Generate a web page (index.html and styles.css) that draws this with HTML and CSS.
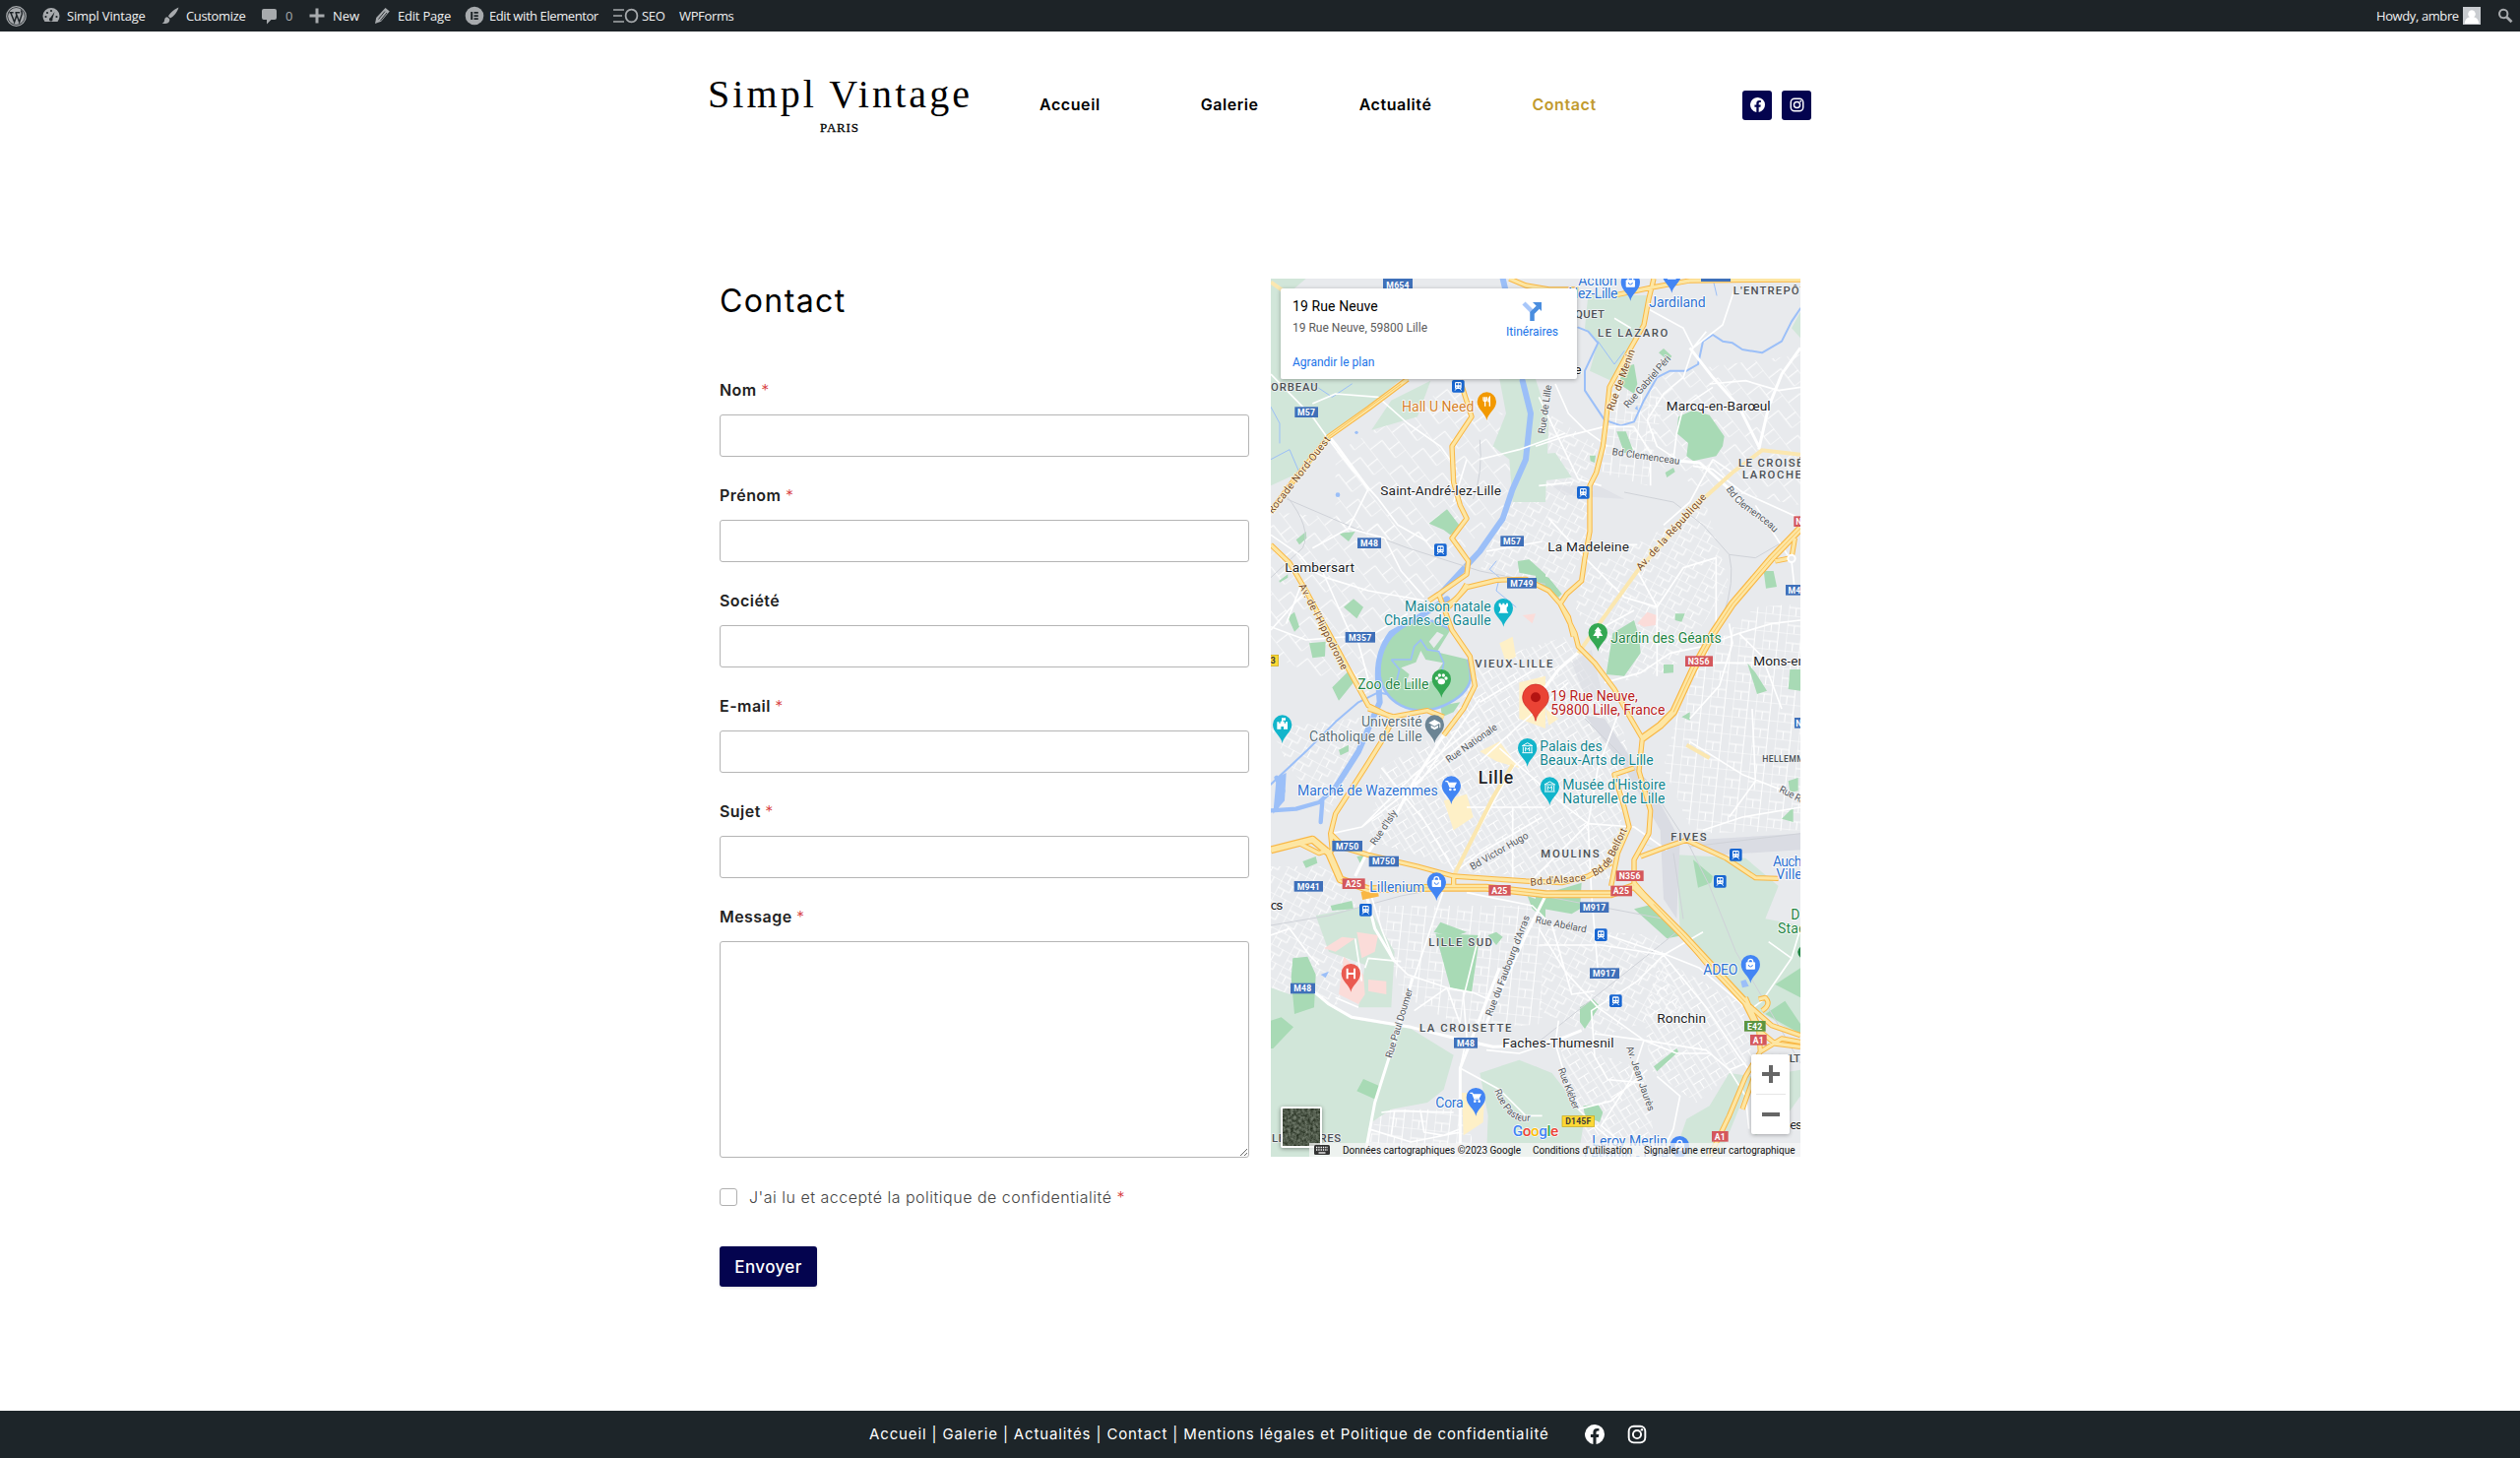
FILE: index.html
```html
<!DOCTYPE html>
<html lang="fr">
<head>
<meta charset="utf-8">
<title>Contact – Simpl Vintage</title>
<link rel="stylesheet" href="styles.css">
</head>
<body>
<svg class="defs" width="0" height="0" aria-hidden="true">
  <defs>
    <symbol id="fb" viewBox="0 0 24 24"><path d="M24 12a12 12 0 1 0-13.900 11.850v-8.380H7.080V12h3.020V9.360c0-3 1.790-4.670 4.530-4.670 1.310 0 2.690.24 2.690.24v2.950h-1.520c-1.490 0-1.950.93-1.950 1.870V12h3.330l-.53 3.470h-2.800v8.380A12 12 0 0 0 24 12z"/></symbol>
    <symbol id="ig" viewBox="0 0 24 24"><g fill="none" stroke="currentColor" stroke-width="2.300"><rect x="2" y="2" width="20" height="20" rx="6"/><circle cx="12" cy="12" r="4.900"/></g><circle cx="17.900" cy="6.200" r="1.500"/></symbol>
    <path id="pin" d="M0 57C-4 34-29 24-29 0A29 29 0 1 1 29 0C29 24 4 34 0 57Z"/>
    <g id="train"><rect x="-19" y="-19" width="38" height="38" rx="5" fill="#1967d2"/><rect x="-10" y="-13" width="20" height="21" rx="4" fill="#fff"/><path d="M-7 -9h6v6h-6zM1 -9h6v6H1zM-6 1h3v3h-3zM3 1h3v3H3z" fill="#1967d2"/><path d="M-6 8l-4 5M6 8l4 5" stroke="#fff" stroke-width="3"/></g>
    <g id="bag"><rect x="-14" y="-7" width="28" height="22" rx="3" fill="#fff"/><path d="M-7 -6v-3a7 7 0 0 1 14 0v3" fill="none" stroke="#fff" stroke-width="4"/><path d="M-6 1a6 6 0 0 0 12 0" fill="none" stroke="#4285f4" stroke-width="3"/></g>
    <g id="cart"><path d="M-18 -13h7l7 17h15" fill="none" stroke="#fff" stroke-width="4"/><path d="M-10 -10h27l-6 12H-5z" fill="#fff"/><circle cx="-3" cy="12" r="4" fill="#fff"/><circle cx="10" cy="12" r="4" fill="#fff"/></g>
    <g id="museum" fill="none" stroke="#fff" stroke-width="3"><path d="M-16 -6L0 -15L16 -6zM-16 15h32M-13 -3v16M13 -3v16"/><path d="M-6 11V-1l6 6 6-6v12"/></g>
    <pattern id="gridA" width="64" height="46" patternUnits="userSpaceOnUse" patternTransform="rotate(28)"><path d="M0 0H64M0 23H40M0 0V46M40 0V23M22 23V46" class="grid"/></pattern>
    <pattern id="gridB" width="58" height="50" patternUnits="userSpaceOnUse" patternTransform="rotate(-32)"><path d="M0 0H58M20 25H58M0 0V50M20 0V50M42 25V50" class="grid"/></pattern>
    <pattern id="gridC" width="70" height="54" patternUnits="userSpaceOnUse" patternTransform="rotate(6)"><path d="M0 0H70M0 30H45M0 0V54M45 0V54M22 30V54" class="grid"/></pattern>
    <pattern id="gridD" width="96" height="84" patternUnits="userSpaceOnUse" patternTransform="rotate(52)"><path d="M0 0H96M30 40H96M0 0V40M30 40V84M66 0V40" class="grid"/></pattern>
  </defs>
</svg>

<header class="adminbar">
  <div class="ab-item ab-wp"><svg width="21" height="21" viewBox="0 0 20 20"><circle cx="10" cy="10" r="9.300" fill="none" stroke="currentColor" stroke-width="1.200"/><circle cx="10" cy="10" r="8" fill="currentColor"/><path d="M3.300 6.500h4M9 6.500h4.500M4.800 6.800L8.200 15.600 10.300 9.300M9.700 6.800l3.300 8.800 2.500-7.600c.4-1.600-.8-2.600-.6-3.800" fill="none" stroke="#1d2327" stroke-width="1.400"/></svg></div>
  <div class="ab-item ab-site"><svg width="20" height="20" viewBox="0 0 20 20"><path d="M3.500 16A8.500 8.500 0 1 1 16.500 16z" fill="currentColor"/><g fill="#1d2327"><circle cx="4.500" cy="11" r="1.100"/><circle cx="6" cy="7" r="1.100"/><circle cx="10" cy="5" r="1.100"/><circle cx="15.500" cy="11" r="1.100"/><path d="M13.500 6l-2.100 7a1.800 1.800 0 1 1-2.200-1z"/></g></svg><span>Simpl Vintage</span></div>
  <div class="ab-item ab-customize"><svg width="20" height="20" viewBox="0 0 20 20"><path d="M18.500 1.500C13 4 9 8 8 10.500l2 2C13 11 17 7 18.500 1.500zM7 11.200c-3 .2-2.700 3-3.200 4.500-.4 1-1.300 1.800-2.300 2 4 1 8.500-.3 7.700-4.500z" fill="currentColor"/></svg><span>Customize</span></div>
  <div class="ab-item ab-comments"><svg width="20" height="20" viewBox="0 0 20 20"><path d="M4 3h11a2 2 0 0 1 2 2v7a2 2 0 0 1-2 2h-3.500L7 18.500V14H4a2 2 0 0 1-2-2V5a2 2 0 0 1 2-2z" fill="currentColor"/></svg><span>0</span></div>
  <div class="ab-item ab-new"><svg width="20" height="20" viewBox="0 0 20 20"><path d="M8.500 2.500h3v6h6v3h-6v6h-3v-6h-6v-3h6z" fill="currentColor"/></svg><span>New</span></div>
  <div class="ab-item ab-edit"><svg width="20" height="20" viewBox="0 0 20 20"><path d="M13.500 2l4.300 3.500-8.600 10.200L3 18l1.200-6z" fill="currentColor"/><path d="M13 5.500l-6.500 8M15 7l-6.500 8" stroke="#1d2327" stroke-width=".9"/></svg><span>Edit Page</span></div>
  <div class="ab-item ab-elementor"><svg width="20" height="20" viewBox="0 0 20 20"><circle cx="10" cy="10" r="9.300" fill="currentColor"/><path d="M6.200 6h2v8h-2zM9.500 6h4.300v1.700H9.500zM9.500 9.200h4.300v1.700H9.500zM9.500 12.300h4.300V14H9.500z" fill="#1d2327"/></svg><span>Edit with Elementor</span></div>
  <div class="ab-item ab-seo"><svg width="26" height="16" viewBox="0 0 26 16"><path d="M0 2h11M0 8h9M0 14h11" stroke="currentColor" stroke-width="1.600"/><ellipse cx="18.500" cy="8" rx="5.900" ry="6.400" fill="none" stroke="currentColor" stroke-width="1.800"/></svg><span>SEO</span></div>
  <div class="ab-item ab-forms"><span>WPForms</span></div>
  <div class="ab-item ab-user"><span>Howdy, ambre</span><svg width="18" height="18" viewBox="0 0 18 18"><path fill="#c9ccd0" d="M0 0h18v18H0z"/><path fill="#fff" d="M9 3.200a3.800 3.800 0 0 1 2 7c2.700.6 5 2.500 5.200 6.800H1.800c.2-4.300 2.500-6.200 5.200-6.800a3.800 3.800 0 0 1 2-7z"/></svg></div>
  <div class="ab-item ab-search"><svg width="16" height="16" viewBox="0 0 16 16"><circle cx="6.200" cy="6" r="4.200" fill="none" stroke="currentColor" stroke-width="2"/><path d="M9.400 9.200L14.500 14.300" stroke="currentColor" stroke-width="2.800"/></svg></div>
</header>

<div class="site-header">
  <svg class="logo" width="270" height="64" viewBox="0 0 270 64" role="img">
    <text x="1" y="33.500" class="logo-name" textLength="266">Simpl Vintage</text>
    <text x="115" y="58.500" class="logo-city" textLength="39">PARIS</text>
  </svg>
  <nav class="nav"><a>Accueil</a><a>Galerie</a><a>Actualité</a><a class="active">Contact</a></nav>
  <div class="social">
    <a class="social-btn"><svg width="15" height="15"><use href="#fb"/></svg></a>
    <a class="social-btn"><svg width="15" height="15"><use href="#ig"/></svg></a>
  </div>
</div>

<main class="content">
  <form class="form">
    <h1 class="title">Contact</h1>
    <label class="field"><span>Nom <i>*</i></span><input type="text"></label>
    <label class="field"><span>Prénom <i>*</i></span><input type="text"></label>
    <label class="field"><span>Société</span><input type="text"></label>
    <label class="field"><span>E-mail <i>*</i></span><input type="text"></label>
    <label class="field"><span>Sujet <i>*</i></span><input type="text"></label>
    <label class="field"><span>Message <i>*</i></span><textarea></textarea></label>
    <label class="consent"><b class="checkbox"></b><span>J'ai lu et accepté la politique de confidentialité <i>*</i></span></label>
    <button class="submit" type="button">Envoyer</button>
  </form>

  <section class="map">
    <svg class="map-canvas" width="538" height="892" viewBox="3 9 1614 2676">
      <rect x="0" y="0" width="1620" height="2700" fill="#e8eaed"/>

      <!-- street fabric -->
      <path fill="url(#gridD)" d="M200 540L560 330L740 440L730 700L560 860L200 760zM1180 300L1617 240V700L1300 640L1080 520z"/>
      <path fill="url(#gridD)" d="M3 720L480 760L540 960L340 1120L300 1280L3 1160z"/>
      <path fill="url(#gridA)" d="M850 420L1000 520L970 800L900 960L640 900L720 700L850 620zM960 900L1330 700L1400 940L1230 1200L1060 1240L930 1010z"/>
      <path fill="url(#gridC)" d="M1040 260L1200 380L1150 640L1010 600zM1280 1190L1480 1010L1617 1000V1690L1290 1700L1200 1500z"/>
      <path fill="url(#gridB)" d="M640 1180L900 1100L1070 1350L1100 1500L1040 1840L620 1820L300 1720L340 1500L540 1380z"/>
      <path fill="url(#gridA)" d="M3 1380L330 1340L180 1640L60 1500zM3 1800L180 1800L320 2000L200 2230L3 2180z"/>
      <path fill="url(#gridC)" d="M320 1920L830 1920L830 2280L600 2300L400 2190zM330 2540L580 2540L640 2685H290z"/>
      <path fill="url(#gridA)" d="M840 1990L1180 2010L1260 2240L1000 2320L820 2240z"/>
      <path fill="url(#gridB)" d="M1190 2080L1440 2220L1470 2380L1300 2520L1160 2420L1140 2250zM880 2330L1140 2420L1180 2685L960 2640z"/>

      <!-- countryside -->
      <g fill="#d1e6d9">
        <path d="M3 9H110L3 100zM3 100L33 60V315H400L300 400L180 490L90 600L3 640z"/>
        <path d="M370 380L490 320L450 430L310 470z"/>
        <path d="M700 315H810L850 440L840 690H740L730 560L680 520L720 420z"/>
        <path d="M810 545L870 540L920 615L810 628z"/>
        <path d="M970 60L1160 60L1140 160L1040 320L975 290L1000 200L960 160z"/>
        <path d="M1617 110V190L1590 160z"/>
        <path d="M3 2170L60 2190L120 2170L180 2220L250 2265L430 2295L560 2375L530 2480L480 2520L370 2540L310 2580L290 2685H3z"/>
        <path d="M640 2430L760 2390L860 2430L960 2560L940 2685H660L665 2560z"/>
        <path d="M1240 1765L1450 1775L1550 1860L1510 1960L1617 1980V2320L1450 2215L1250 2000z"/>
        <path d="M1400 2430L1470 2440L1370 2685H1230L1270 2570L1340 2530z"/>
        <path d="M1500 2440L1617 2420V2500L1560 2580L1480 2620z"/>
        <path d="M140 1950L300 1920L380 2060L370 2230L270 2230L290 2100L180 2060z"/>
        <path d="M810 2410L850 2430L810 2460z"/>
      </g>
      <!-- industry and rail yards -->
      <g fill="#dadce3">
        <path d="M960 1340L1020 1350L1180 1590L1250 1720L1240 1960L1200 1900L1190 1690L1080 1500z"/>
        <path d="M1290 1720L1617 1700V1750L1370 1765z"/>
        <path d="M860 640L1000 640L1080 680L900 670z" opacity=".6"/>
        <path d="M920 1180L980 1140L1020 1300L960 1280z" opacity=".6"/>
      </g>
      <!-- parks -->
      <g fill="#a8dab5">
        <path d="M1245 430L1290 410L1340 425L1385 490L1380 520L1360 550L1290 565L1270 550L1275 510L1240 480z"/>
        <path d="M1075 280L1110 270L1120 330L1110 360L1065 330zM1185 235L1200 222L1225 245L1215 260zM1057 475L1085 475L1110 540H1080zM1205 600L1230 585L1235 598L1210 615zM975 548H993L990 570L977 565z"/>
        <path d="M485 755L540 712L585 770L550 790L530 775zM210 785L260 780L240 810zM80 805L110 780L112 800L90 820zM225 1010L255 985L285 1010L265 1045zM55 1040L75 1025L90 1070L75 1085zM120 1120L170 1115L168 1160L130 1165zM190 1255L245 1200L255 1240L210 1295zM28 930L55 910V920L30 935z"/>
        <path d="M755 870L790 865L840 910V920L760 905zM810 905L850 920L890 970L880 980L810 940z"/>
        <path d="M1045 1090L1110 1050L1125 1100L1130 1150L1080 1220L1025 1215zM1505 900H1535L1545 948L1512 953zM1235 1030L1265 1030L1255 1055L1235 1050zM1200 1185H1230V1210L1200 1212zM1455 1180L1480 1210L1515 1265L1485 1275zM1585 1200H1617V1265L1580 1260zM1255 1345L1280 1330V1355z"/>
        <path d="M520 1310L580 1300L560 1330L525 1345zM210 1445L240 1430V1450L215 1462zM100 1785L140 1770L145 1790L110 1805zM265 1770L295 1765L275 1790zM185 1920L250 1905L255 1930L190 1935zM500 2000L520 1970L600 2000L560 2015zM785 1890L840 1910V1960L800 1930z"/>
        <path d="M810 1890L900 1865L950 1850L945 1930L920 1945L810 1925zM1290 1780L1350 1830L1345 1850L1305 1865zM1110 1930L1170 1915L1260 2010L1210 2020zM1140 1730L1180 1745L1150 1735zM1580 1540L1610 1530V1570L1585 1575zM1560 1655L1595 1620V1665z"/>
        <path d="M505 2005L640 2010L615 2185L550 2170zM70 2080L115 2075L140 2130L135 2230L75 2250L65 2140zM3 2270L35 2260L72 2290L10 2355H3zM265 2485L285 2448L335 2470L325 2512zM945 2230L985 2205L1005 2225L960 2295L945 2275zM1170 2410L1240 2355L1245 2365L1180 2425zM955 2530L1000 2525L1015 2550L1005 2580L960 2560zM1510 2250L1570 2210L1617 2280V2310z"/>
        <path d="M1540 2160L1617 2110V2200zM665 2010L690 2000L710 2015L690 2040z"/>
      </g>
      <!-- hospitals and shopping -->
      <g fill="#fbdcd9"><path d="M165 2050L220 2015L260 2020L200 2060zM265 2000L330 2010L320 2060L280 2080zM225 2075L285 2130L290 2190L270 2220L210 2190zM300 2145L355 2150V2190L300 2180zM1120 1060L1150 1025L1180 1035L1175 1065L1140 1070zM770 1035L810 1030L800 1060z"/></g>
      <g fill="#fef0c7"><path d="M700 1120L740 1100L750 1160L720 1180zM760 1240L840 1220V1380L760 1350zM840 1320L880 1350L850 1370zM530 1600L600 1580L620 1650L560 1690zM585 2490L655 2490L650 2580L590 2620zM640 1450L700 1420L760 1500L690 1480z"/></g>

      <!-- water -->
      <g fill="none" stroke="#9bbff8" stroke-linecap="round" stroke-linejoin="round">
        <path stroke-width="18" d="M710 9L722 60M770 320L795 420L780 560L740 650L710 740L640 840L520 970"/>
        <path stroke-width="18" d="M540 985L440 1050L370 1090Q325 1150 330 1230L335 1300L270 1450L200 1560"/>
        <path stroke-width="13" d="M3 1630L80 1625L150 1605L200 1560M160 1600L155 1665"/>
        <path stroke-width="14" d="M20 1530L40 1570L20 1620"/>
        <path stroke-width="6" d="M3 1550L110 1450L200 1360L270 1300L330 1270L380 1280"/>
        <path stroke-width="6" d="M940 158L970 170L1000 205L960 290V350L1020 440L1070 457L1110 445L1140 380L1180 310L1220 290L1270 290L1305 270L1320 200L1350 180L1380 200L1410 205L1440 225L1500 235L1560 200L1590 140L1617 100"/>
        <path stroke-width="3" d="M1350 9L1362 60M690 870L670 895L700 920L690 960L750 1010M1000 200L1050 270L1080 230M3 560L60 530L90 600M130 330L190 370L250 330M3 400L30 450V510M1010 20L1040 60"/>
      </g>
      <g fill="#9bbff8"><path d="M20 1530L50 1515L45 1600L10 1640zM1112 405L1120 395L1122 410zM155 2130L180 2120L170 2140zM1435 2150L1450 2145L1460 2165L1440 2170z"/><circle cx="264" cy="478" r="5"/><circle cx="207" cy="668" r="7"/></g>
      <!-- citadel -->
      <path d="M470 1050Q420 1050 370 1100Q330 1150 335 1220Q345 1280 400 1310Q460 1340 530 1310Q600 1280 612 1230Q612 1150 560 1090Q520 1050 470 1050Z" fill="#a8dab5" stroke="#9bbff8" stroke-width="8"/>
      <path d="M510 1145L550 1080L600 1150L605 1170L520 1150zM485 1115L510 1085L530 1095L500 1135z" fill="#e8eaed"/>
      <path d="M370 1170L430 1170L440 1130L460 1110L480 1140L515 1145L530 1180L520 1230M370 1170L395 1200L385 1240" fill="none" stroke="#9bbff8" stroke-width="5"/>
      <path d="M460 1143L475 1170L528 1180L510 1205L525 1235L490 1235L475 1260L455 1235L415 1240L425 1215L400 1195L445 1178z" fill="#e8eaed"/>

      <!-- railways -->
      <g fill="none" stroke="#cfd2d8" stroke-width="3">
        <path d="M50 680L260 770L420 830L640 900L840 940M3 920L100 830Q130 770 50 670M1080 660L1230 690L1320 760L1400 850L1480 860L1617 780M1400 850Q1420 930 1380 1040M3 1980L180 1950L400 1890L560 1860M1280 1740L1340 1860L1420 2060L1617 2400M800 2350L1240 2000M1230 1760L1260 1960"/>
        <path d="M640 500Q650 600 620 680M520 1870L780 1880L1200 1960M960 1350L1150 1540L1280 1740M1280 1740L1617 1700"/>
      </g>

      <!-- local roads -->
      <g fill="none" stroke="#fff" stroke-width="5" stroke-linejoin="round">
        <path d="M3 300L130 430L180 500L250 590L330 680L390 760L480 810M130 390L200 360L330 370L420 450L520 520L570 590M640 560L760 530L900 480M3 790L90 850L130 900L170 920L300 960L470 990M130 830L240 770L300 650M110 960L3 1080M240 770L350 800L400 900L470 980M160 900L240 1080L270 1120L420 1030M3 1070L110 1110L240 1100M100 930L50 1060M270 1120L300 1230M660 840L830 810M600 560L560 690"/>
        <path d="M870 330L910 420L960 470L1030 520M810 520L900 490L1020 460L1110 460L1160 540L1160 640M1150 440L1200 360L1260 310L1290 220L1380 150L1420 30M1150 440L1180 520L1240 560M1230 560L1240 480L1260 400L1350 340M1350 560L1280 690L1200 760M1150 100L1260 160L1290 220L1330 170M1290 580L1350 590L1440 660L1617 740M1350 560L1410 600M1340 330L1450 320L1550 350L1617 340M1100 160L1050 130M820 370L940 620L1010 640M820 640L920 630"/>
        <path d="M930 820L1120 820M850 740L960 860L1080 980L1180 1010M1120 900L1180 1010L1180 1220M1180 1010L1260 890L1360 860V1060M1020 1240L1130 1210L1220 1150L1320 1130L1430 1090L1530 1060L1617 1050M1290 1180L1617 1180M1430 1090L1500 1160L1560 1320M1400 1060L1410 1120L1370 1250L1280 1350M1480 700L1590 870L1600 960M1280 1420L1440 1520L1617 1590M1470 1320L1480 1540L1400 1650M1617 1620L1440 1650L1320 1690M1000 1080L1110 1020M640 1300L840 1180"/>
        <path d="M640 1480L760 1370L910 1240M280 1680L460 1540L560 1400L640 1290M190 1700L280 1680L440 1520L640 1360M340 1500L470 1660L560 1810M440 1550L640 1380M560 1830L640 1680L740 1500L840 1410M560 1820L640 1760L830 1650M600 1620H840M700 1440L880 1600L970 1670L1110 1680L1210 1750M970 1670L860 1780L800 1840M970 1670L980 1880L1000 2120M1060 1340L1000 1500L970 1670M880 1600L1110 1600M740 1840V1620M530 1870L500 1960L440 2140M300 1860L340 1990L380 2090L420 2130L540 2170L620 2185L700 2220"/>
        <path d="M3 2010L60 1990L120 2070L150 2100M200 2200L270 2230M600 1880L800 1920L860 1980L920 2190L990 2180M820 2040L1010 2040L1200 2070L1320 2000M1200 2070L1330 2230L1430 2380L1490 2460M1030 2010L1210 2070L1310 2110L1450 2230M820 1990L900 2120L1000 2230L1140 2330M1200 2070L1120 2150L980 2240L990 2380L1030 2450L1140 2460M1140 2330L1330 2360L1400 2420L1450 2400M1400 2420L1450 2500L1460 2600M1140 2330L1100 2450L1010 2590L1120 2685M1180 2440L1250 2500L1230 2600L1190 2680M990 2310L1140 2330L1240 2370L1340 2370M1520 2030L1590 2080L1500 2210L1460 2240M1590 2080L1617 1990M880 2270L870 2340L900 2440L940 2540L1000 2600L1100 2685M940 2540L1040 2515L1150 2420M580 2415L700 2480L780 2560L830 2560"/>
        <path d="M340 2550L380 2545L560 2550M380 2545L370 2620M460 2550L470 2610L530 2620L580 2600M300 2600L430 2640L580 2610M440 2240L540 2170L580 2280M640 2000L590 2200L600 2320L580 2415M290 2110L300 2080L400 2090M260 2020L280 2150M660 2360L760 2370L820 2350"/>
      </g>
      <g fill="none" stroke="#fff" stroke-width="9" stroke-linejoin="round">
        <path d="M180 490L205 520L300 650M1280 220L1350 310L1430 400L1490 520M1490 530L1520 400L1560 300L1617 220M1250 565L1310 570L1400 650L1440 700M530 1400L440 1540L380 1650L290 1770L260 1830M120 2170L180 2220L250 2260L430 2290L570 2325L680 2350L810 2345L900 2320L950 2300M435 2140L380 2330L320 2520L290 2680M700 2110L580 2415L580 2690M850 1870L780 2010L650 2300M950 1140L880 1200L820 1280M380 2090L320 1990L290 1870"/>
      </g>

      <!-- avenues -->
      <g fill="none" stroke="#fbe7b0" stroke-width="12"><path d="M1617 545L1500 532L1410 600L1310 690L1120 900L990 1080L940 1150M1270 1430L1340 1470M560 1830L680 1590L740 1490M3 20L60 60L150 50"/></g>

      <!-- trunk roads -->
      <g fill="none" stroke="#f9b744" stroke-width="16" stroke-linejoin="round">
        <path id="trunk" d="M1170 9L1155 70L1140 150L1100 220L1035 340L1025 440L1015 520L995 600L975 640V780L960 860L950 930L905 970L885 1000M1050 60L1170 35L1280 15L1617 12M730 9L780 30L850 42H940M545 1010L600 950L690 928L780 925L850 960L885 1000L930 1090L940 1130L990 1180L1050 1260L1100 1350L1135 1410L1125 1510L1160 1630L1155 1700L1110 1780V1850L1160 1910L1260 2010L1330 2095L1450 2215L1530 2285L1617 2315M885 1000L910 1040L925 1100M580 320L615 430L555 520L560 630L580 700L600 740L555 800L605 870L600 910L515 970L485 990M515 970L555 1080L610 1160L625 1250L590 1320L530 1400M510 1010Q560 1010 600 940M420 315L300 405L180 490L60 640L3 720M3 820L60 875L110 960L240 1200L300 1310L370 1345L480 1325L530 1345M300 1320L380 1345L340 1420L290 1500L200 1640L185 1700L190 1750L180 1760M185 1700L230 1745L300 1765L450 1800L560 1830L780 1845L890 1850L970 1830L1040 1790M1110 1500L1050 1520L1080 1620L1095 1680L1060 1760L1040 1860M1130 1770L1210 1740L1270 1720L1390 1775L1480 1835L1550 1837M90 1730L150 1760L180 1750M560 1830V1865M1450 2200L1490 2295L1495 2365L1450 2440L1400 2560L1340 2685M1495 2365L1560 2325L1617 2335M1490 2400L1440 2540M1490 2300L1540 2340L1617 2350M1500 2240Q1530 2220 1510 2200L1490 2205M1540 870L1590 860L1600 800"/>
      </g>
      <g fill="none" stroke="#f9b744" stroke-width="24" stroke-linejoin="round"><path d="M1617 770L1530 860L1410 1000L1350 1090L1290 1200L1230 1330L1190 1370L1135 1410M3 1750L130 1718L180 1760L215 1840L300 1870L500 1865L660 1865L840 1885H1040L1110 1860M1110 1860L1260 2010L1450 2215L1490 2295M280 1890L330 1880"/></g>
      <use href="#trunk" class="trunk-fill"/>
      <g fill="none" stroke="#fde6a3" stroke-width="17" stroke-linejoin="round"><path d="M1617 770L1530 860L1410 1000L1350 1090L1290 1200L1230 1330L1190 1370L1135 1410M3 1750L130 1718L180 1760L215 1840L300 1870L500 1865L660 1865L840 1885H1040L1110 1860M1110 1860L1260 2010L1450 2215L1490 2295"/></g>
      <g fill="none" stroke="#fbc55c" stroke-width="3"><path d="M1617 770L1530 860L1410 1000L1350 1090L1290 1200L1230 1330M215 1840L300 1870L500 1865L660 1865L840 1885H1040M1170 1915L1260 2010L1450 2215M400 330L180 490L60 640"/></g>
      <circle cx="1590" cy="862" r="11" fill="#e8eaed" stroke="#fff" stroke-width="6"/>

      <!-- shields -->
      <g class="shield blue">
        <rect x="345" y="-4" width="90" height="43"/><text x="390" y="39">M654</text>
        <rect x="76" y="400" width="71" height="32"/><text x="111" y="426">M57</text>
        <rect x="267" y="799" width="72" height="32"/><text x="303" y="826">M48</text>
        <rect x="703" y="793" width="71" height="32"/><text x="738" y="819">M57</text>
        <rect x="723" y="921" width="90" height="32"/><text x="768" y="947">M749</text>
        <rect x="230" y="1086" width="91" height="32"/><text x="275" y="1112">M357</text>
        <rect x="1572" y="942" width="70" height="32"/><text x="1607" y="969">M48</text>
        <rect x="1599" y="1347" width="70" height="32"/><text x="1612" y="1374">N</text>
        <rect x="190" y="1722" width="92" height="32"/><text x="236" y="1748">M750</text>
        <rect x="302" y="1769" width="91" height="32"/><text x="347" y="1795">M750</text>
        <rect x="74" y="1845" width="88" height="32"/><text x="118" y="1872">M941</text>
        <rect x="945" y="1909" width="88" height="32"/><text x="989" y="1935">M917</text>
        <rect x="975" y="2110" width="90" height="32"/><text x="1019" y="2136">M917</text>
        <rect x="63" y="2156" width="75" height="32"/><text x="100" y="2182">M48</text>
        <rect x="561" y="2322" width="72" height="32"/><text x="597" y="2348">M48</text>
        <rect x="1314" y="0" width="90" height="18"/>
      </g>
      <g class="shield red">
        <rect x="1266" y="1159" width="84" height="32"/><text x="1307" y="1185">N356</text>
        <rect x="1597" y="733" width="84" height="32"/><text x="1612" y="759">N</text>
        <rect x="221" y="1837" width="69" height="32"/><text x="255" y="1863">A25</text>
        <rect x="667" y="1857" width="67" height="32"/><text x="700" y="1883">A25</text>
        <rect x="1055" y="1813" width="84" height="32"/><text x="1097" y="1839">N356</text>
        <rect x="1039" y="1859" width="65" height="32"/><text x="1071" y="1885">A25</text>
        <rect x="1464" y="2313" width="50" height="32"/><text x="1489" y="2339">A1</text>
        <rect x="1347" y="2607" width="50" height="32"/><text x="1372" y="2633">A1</text>
      </g>
      <g class="shield green"><rect x="1446" y="2271" width="65" height="32"/><text x="1478" y="2297">E42</text></g>
      <g class="shield yellow"><rect x="891" y="2561" width="98" height="32"/><text x="940" y="2587">D145F</text><rect x="-20" y="1156" width="46" height="33"/><text x="10" y="1183">3</text></g>

      <!-- stations -->
      <use href="#train" x="574" y="337"/><use href="#train" x="520" y="836"/><use href="#train" x="955" y="661"/>
      <use href="#train" x="1420" y="1765"/><use href="#train" x="1372" y="1846"/><use href="#train" x="292" y="1933"/>
      <use href="#train" x="1009" y="2009"/><use href="#train" x="1054" y="2210"/>

      <!-- street names -->
      <g class="street">
        <text transform="translate(1092 405) rotate(-49)" textLength="200">Rue Gabriel Péri</text>
        <text transform="translate(838 483) rotate(-82)" textLength="150">Rue de Lille</text>
        <text transform="translate(1042 546) rotate(8)" textLength="208">Bd Clemenceau</text>
        <path id="clem" d="M1390 650Q1420 700 1480 735Q1530 770 1560 810" fill="none" stroke="none"/><text><textPath href="#clem" textLength="200">Bd Clemenceau</textPath></text>
        <text transform="translate(545 1486) rotate(-35)" textLength="184">Rue Nationale</text>
        <text transform="translate(321 1738) rotate(-56)" textLength="122">Rue d'Isly</text>
        <text transform="translate(617 1812) rotate(-30)" textLength="200">Bd Victor Hugo</text>
        <text transform="translate(808 1972) rotate(11)" textLength="158">Rue Abélard</text>
        <text transform="translate(1550 1572) rotate(27)" textLength="125">Rue Roger</text>
        <text transform="translate(371 2386) rotate(-73)" textLength="220">Rue Paul Doumer</text>
        <text transform="translate(676 2258) rotate(-69)" textLength="325">Rue du Faubourg d'Arras</text>
        <text transform="translate(878 2419) rotate(69)" textLength="132">Rue Kléber</text>
        <text transform="translate(1086 2351) rotate(71)" textLength="208">Av. Jean Jaurès</text>
        <path id="past" d="M684 2484Q715 2560 760 2575L820 2578" fill="none" stroke="none"/><text><textPath href="#past" textLength="155">Rue Pasteur</textPath></text>
      </g>
      <g class="avenue">
        <text transform="translate(1046 413) rotate(-70)" textLength="196">Rue de Menin</text>
        <text transform="translate(1130 900) rotate(-48)" textLength="302">Av. de la République</text>
        <text transform="translate(88 945) rotate(63)" textLength="290">Av. de l'Hippodrome</text>
        <text transform="translate(8 727) rotate(-52)" textLength="288">Rocade Nord-Ouest</text>
        <text transform="translate(794 1859) rotate(-5)" textLength="170">Bd.d'Alsace</text>
        <path id="belf" d="M988 1830Q1030 1815 1052 1765L1098 1672" fill="none" stroke="none"/><text><textPath href="#belf" textLength="178">Bd de Belfort</textPath></text>
      </g>

      <!-- districts -->
      <g class="district">
        <text x="-22" y="351" textLength="168">CORBEAU</text><text x="930" y="130" textLength="90">QUET</text><text x="999" y="187" textLength="214">LE LAZARO</text>
        <text x="1412" y="57" textLength="224">L'ENTREPÔT</text><text x="1428" y="582" textLength="212">LE CROISÉ-</text><text x="1440" y="618" textLength="180">LAROCHE</text>
        <text x="625" y="1194" textLength="237">VIEUX-LILLE</text><text x="1222" y="1721" textLength="109">FIVES</text><text x="826" y="1773" textLength="178">MOULINS</text>
        <text x="484" y="2043" textLength="194">LILLE SUD</text><text x="456" y="2304" textLength="280">LA CROISETTE</text><text x="6" y="2641" textLength="210">LESQUIERES</text>
        <text x="1501" y="2396" textLength="116">ENNELT</text>
        <text x="1501" y="1481" class="small" textLength="160">HELLEMMES</text>
      </g>
      <g class="town">
        <text x="337" y="669" textLength="368">Saint-André-lez-Lille</text><text x="1208" y="411" textLength="318">Marcq-en-Barœul</text><text x="46" y="902" textLength="212">Lambersart</text>
        <text x="847" y="839" textLength="248">La Madeleine</text><text x="1474" y="1188" textLength="195">Mons-en-B</text><text x="1180" y="2277" textLength="149">Ronchin</text>
        <text x="709" y="2352" textLength="340">Faches-Thumesnil</text><text x="2" y="1932" textLength="38">os</text><text x="1585" y="2602" textLength="38">es</text><text x="928" y="300">e</text>
        <text x="635" y="1547" class="city" textLength="107">Lille</text>
      </g>

      <!-- places -->
      <g class="place">
        <text x="402" y="413" fill="#d5812b" textLength="220">Hall U Need</text>
        <g fill="#2e72d2"><text x="940" y="31" textLength="118">Action</text><text x="910" y="70" textLength="150">Nez-Lille</text><text x="1156" y="97" textLength="172">Jardiland</text>
        <text x="84" y="1583" textLength="428">Marché de Wazemmes</text><text x="304" y="1878" textLength="168">Lillenium</text><text x="1533" y="1799" textLength="130">Auchan</text><text x="1543" y="1840" textLength="190">Villeneuve</text>
        <text x="505" y="2534" textLength="85">Cora</text><text x="1321" y="2130" textLength="105">ADEO</text><text x="982" y="2653" textLength="230">Leroy Merlin</text><text x="956" y="2698" textLength="258">Lesquin - Lille</text></g>
        <g fill="#12858f"><text x="411" y="1022" textLength="263">Maison natale</text><text x="348" y="1064" textLength="326">Charles de Gaulle</text><text x="823" y="1448" textLength="190">Palais des</text><text x="823" y="1490" textLength="346">Beaux-Arts de Lille</text><text x="892" y="1565" textLength="314">Musée d'Histoire</text><text x="892" y="1607" textLength="312">Naturelle de Lille</text></g>
        <g fill="#1f8544"><text x="268" y="1259" textLength="216">Zoo de Lille</text><text x="1039" y="1118" textLength="337">Jardin des Géants</text><text x="1588" y="1961" textLength="110">Decat</text><text x="1548" y="2003" textLength="110">Stade</text></g>
        <g fill="#5b7079"><text x="279" y="1375" textLength="185">Université</text><text x="120" y="1418" textLength="344">Catholique de Lille</text></g>
        <g fill="#b8201d"><text x="856" y="1296" textLength="265">19 Rue Neuve,</text><text x="856" y="1338" textLength="348">59800 Lille, France</text></g>
      </g>

      <!-- pins -->
      <g transform="translate(661 384)"><use href="#pin" fill="#f29900"/><path d="M-10 -14v9q0 4 5 4t5 -4v-9M-5 -14V14M9 14V-14q-5 4 -4 15" fill="none" stroke="#fff" stroke-width="4"/></g>
      <g transform="translate(1099 20)"><use href="#pin" fill="#4285f4"/><use href="#bag"/></g>
      <g transform="translate(1225 -4)"><use href="#pin" fill="#4285f4"/><use href="#bag"/></g>
      <g transform="translate(712 1013)"><use href="#pin" fill="#12b5cb"/><path d="M-14 -15h6v5h5v-5h6v5h5v-5h6v9l-4 4v9l5 8H-15l5 -8V-2l-4 -4z" fill="#fff"/></g>
      <g transform="translate(523 1229)"><use href="#pin" fill="#34a853"/><g fill="#fff"><ellipse cy="8" rx="11" ry="9"/><circle cx="-14" cy="-2" r="5"/><circle cx="-6" cy="-11" r="5"/><circle cx="6" cy="-11" r="5"/><circle cx="14" cy="-2" r="5"/></g></g>
      <g transform="translate(1000 1088)"><use href="#pin" fill="#34a853"/><path d="M0 -18L11 -4H6L15 10H3V17H-3V10H-15L-6 -4H-11z" fill="#fff"/></g>
      <g transform="translate(502 1368)"><use href="#pin" fill="#6b8494"/><path d="M-18 -5L0 -15L18 -5L0 5zM-11 2L0 8L11 2V10L0 16L-11 10zM15 -4h3V10h-3z" fill="#fff"/></g>
      <g transform="translate(38 1368)"><use href="#pin" fill="#12b5cb"/><path d="M-16 -8H-10V-4H-6V-10H-2V-20H10V-13H2V-10H6V-4H10V-8H16V14H4V6H-4V14H-16z" fill="#fff"/></g>
      <g transform="translate(785 1439)"><use href="#pin" fill="#12b5cb"/><use href="#museum"/></g>
      <g transform="translate(853 1557)"><use href="#pin" fill="#12b5cb"/><use href="#museum"/></g>
      <g transform="translate(553 1554)"><use href="#pin" fill="#4285f4"/><use href="#cart"/></g>
      <g transform="translate(508 1848)"><use href="#pin" fill="#4285f4"/><use href="#bag"/></g>
      <g transform="translate(628 2504)"><use href="#pin" fill="#4285f4"/><use href="#cart"/></g>
      <g transform="translate(1465 2099)"><use href="#pin" fill="#4285f4"/><use href="#bag"/></g>
      <g transform="translate(1249 2651)"><use href="#pin" fill="#4285f4"/><use href="#bag"/></g>
      <g transform="translate(247 2126)"><use href="#pin" fill="#ea5a50"/><path d="M-11 -15V17M11 -15V17M-11 1H11" fill="none" stroke="#fff" stroke-width="6"/></g>
      <path d="M1617 2045Q1600 2060 1617 2078z" fill="#1f8544"/>
      <path d="M810 1357C805 1325 770 1316 770 1285A40 40 0 1 1 850 1285C850 1316 815 1325 810 1357Z" fill="#ea4335" stroke="#c5221f" stroke-width="2"/><circle cx="810" cy="1285" r="15" fill="#b31412"/>

      <text x="740" y="2622" class="google" textLength="140"><tspan fill="#4285f4">G</tspan><tspan fill="#ea4335">o</tspan><tspan fill="#fbbc04">o</tspan><tspan fill="#4285f4">g</tspan><tspan fill="#34a853">l</tspan><tspan fill="#ea4335">e</tspan></text>
    </svg>

    <div class="place-card">
      <div class="place-text"><strong>19 Rue Neuve</strong><span>19 Rue Neuve, 59800 Lille</span><a>Agrandir le plan</a></div>
      <div class="directions"><svg width="22" height="22" viewBox="0 0 22 22"><path d="M2 3l9 9" stroke="#a8c7fa" stroke-width="4.500"/><path d="M10.500 21v-8l6-6" fill="none" stroke="#4a8ddf" stroke-width="4.500"/><path d="M11 2h9v9z" fill="#4a8ddf"/></svg><a>Itinéraires</a></div>
    </div>
    <div class="satellite"><svg width="38" height="38" viewBox="0 0 38 38"><filter id="noise" color-interpolation-filters="sRGB"><feTurbulence type="fractalNoise" baseFrequency=".35" numOctaves="3" seed="4"/><feColorMatrix values=".5 0 0 0 .06  .5 0 0 0 .1  .5 0 0 0 .04  0 0 0 0 1"/></filter><rect width="38" height="38" filter="url(#noise)"/></svg></div>
    <div class="zoom"><svg width="39" height="81" viewBox="0 0 39 81"><path d="M11 20h18M20 11v18M11 61h18" stroke="#666" stroke-width="4"/><path d="M5 40.500h30" stroke="#e6e6e6"/></svg></div>
    <div class="attribution"><svg width="16" height="10" viewBox="0 0 16 10"><rect width="16" height="10" rx="1.500" fill="#333"/><path d="M2 2.500h12M2 5h12" stroke="#fff" stroke-width="1.300" stroke-dasharray="1.300 1"/><path d="M4.500 8h7" stroke="#fff" stroke-width="1.300"/></svg><span class="attr-data">Données cartographiques ©2023 Google</span><span class="attr-terms">Conditions d'utilisation</span><span class="attr-report">Signaler une erreur cartographique</span></div>
  </section>
</main>

<footer class="footer">
  <span class="footer-links">Accueil | Galerie | Actualités | Contact | Mentions légales et Politique de confidentialité</span>
  <svg class="footer-fb" width="20" height="20"><use href="#fb"/></svg>
  <svg width="20" height="20"><use href="#ig"/></svg>
</footer>
</body>
</html>
```
FILE: styles.css
```css
* { box-sizing: border-box; }
body { margin: 0; min-height: 1481px; background: #fff; color: #000; font-family: Inter, "Open Sans", sans-serif; display: flex; flex-direction: column; overflow: hidden; }
.defs { position: absolute; }
.grid { fill: none; stroke: #fff; stroke-width: 3; }

.adminbar { height: 32px; background: #1d2327; color: #f0f0f1; display: flex; align-items: center; padding-left: 6px; font: 13px/32px "Open Sans", sans-serif; }
.ab-item { display: flex; align-items: center; gap: 6px; white-space: nowrap; flex: none; }
.ab-item svg { color: #a7aaad; flex: none; }
.ab-wp { width: 36px; }
.ab-site { width: 121px; letter-spacing: -.2px; }
.ab-customize { width: 101px; letter-spacing: -.35px; }
.ab-comments { width: 48px; color: #a7aaad; }
.ab-new { width: 66px; }
.ab-edit { width: 94px; letter-spacing: -.2px; }
.ab-elementor { width: 151px; gap: 5px; letter-spacing: -.42px; }
.ab-seo { width: 67px; gap: 3px; letter-spacing: -.3px; }
.ab-forms { letter-spacing: -.35px; }
.ab-user { margin-left: auto; width: 123px; gap: 4px; letter-spacing: -.4px; }
.ab-search { width: 23px; }

.site-header { width: 1140px; height: 150px; margin: 0 auto; display: flex; align-items: center; padding: 0 10px 1px 8px; }
.logo { flex: none; }
.logo-name { font: 40px "Liberation Serif", serif; }
.logo-city { font: 13px "Liberation Serif", serif; stroke: #000; stroke-width: .3px; }
.nav { display: flex; gap: 102px; margin-left: 68px; padding-bottom: 1px; font-size: 16px; font-weight: 600; letter-spacing: .57px; }
.nav .active { color: #c19a2e; }
.social { display: flex; gap: 10px; margin-left: auto; }
.social-btn { width: 30px; height: 30px; border-radius: 3px; background: #04044f; color: #fff; fill: #fff; display: flex; align-items: center; justify-content: center; }

.content { width: 1098px; margin: 101px auto 0; display: grid; grid-template-columns: 538px 538px; gap: 22px; align-items: start; }
.title { margin: 0 0 54px; padding-top: 1px; font-size: 32px; line-height: 44px; font-weight: 400; letter-spacing: 1.4px; }
.form { display: flex; flex-direction: column; align-items: stretch; }
.field { display: block; margin-bottom: 25px; }
.field > span { display: block; height: 39px; padding-top: 4px; line-height: 20px; font-size: 16px; font-weight: 600; letter-spacing: .45px; color: #222; }
.form i { font-style: normal; font-weight: 300; color: #d63637; }
.field input, .field textarea { display: block; width: 538px; height: 43px; border: 1px solid #b5b5b5; border-radius: 3px; background: #fff; outline: none; padding: 8px; }
.field textarea { height: 220px; resize: vertical; }
.consent { display: flex; align-items: center; gap: 12px; height: 20px; margin-top: 5px; font-size: 16px; font-weight: 300; letter-spacing: .5px; color: #444; white-space: nowrap; }
.checkbox { width: 18px; height: 18px; border: 1px solid #b0b0b0; border-radius: 3px; }
.submit { align-self: flex-start; width: 99px; height: 41px; margin-top: 40px; padding: 0; border: 0; border-radius: 3px; background: #04044f; color: #fff; font: 500 17px Inter, sans-serif; letter-spacing: .4px; box-shadow: 0 1px 3px #0002; }

.map { position: relative; width: 538px; height: 892px; overflow: hidden; font-family: Roboto, sans-serif; }
.map-canvas { display: block; font-family: Roboto, sans-serif; }
.trunk-fill { stroke: #fde6a3; stroke-width: 10; fill: none; stroke-linejoin: round; }
#trunk { stroke: inherit; stroke-width: inherit; }
.shield text { font-size: 26px; font-weight: 700; fill: #fff; text-anchor: middle; letter-spacing: .6px; }
.blue rect { fill: #3f70b9; }
.red rect { fill: #d4575c; }
.green rect { fill: #5d9540; }
.yellow rect { fill: #fdd835; stroke: #c9a50e; stroke-width: 2; }
.yellow text { fill: #3c3c3c; }
.street text, .avenue text, .district text, .town text, .place text { paint-order: stroke; stroke: #fff; stroke-width: 5px; stroke-linejoin: round; }
.street text { font-size: 30px; fill: #54585d; stroke: #f3f4f6; }
.avenue text { font-size: 31px; fill: #774a26; stroke: #fff6dc; }
.district text { font-size: 34px; font-weight: 500; fill: #4c5055; stroke: #eef0f2; }
.district .small { font-size: 26px; }
.town text { font-size: 41px; fill: #202124; }
.town .city { font-size: 53px; font-weight: 500; }
.place text { font-size: 42px; }
.google { font: 500 46px Roboto, sans-serif; paint-order: stroke; stroke: #fff; stroke-width: 4px; }

.place-card { position: absolute; left: 10px; top: 10px; width: 301px; height: 92px; padding: 10px 19px 0 12px; background: #fff; border-radius: 2px; box-shadow: 0 1px 4px rgba(0,0,0,.3); display: flex; justify-content: space-between; font-size: 12px; }
.place-text { display: flex; flex-direction: column; }
.place-text strong { font-size: 14px; line-height: 16px; font-weight: 400; color: #000; letter-spacing: .1px; }
.place-text span { margin-top: 7px; line-height: 14px; color: #5b5b5b; }
.place-card a { color: #1a73e8; line-height: 14px; }
.place-text a { margin-top: 21px; }
.directions { display: flex; flex-direction: column; align-items: center; gap: 3px; padding-top: 2px; }
.satellite { position: absolute; left: 10px; top: 841px; width: 42px; height: 42px; border: 2px solid #fff; border-radius: 2px; box-shadow: 0 1px 4px #0006; overflow: hidden; }
.satellite svg, .zoom svg { display: block; }
.zoom { position: absolute; left: 488px; top: 788px; width: 39px; height: 81px; border-radius: 2px; background: #fff; box-shadow: 0 1px 4px rgba(0,0,0,.3); }
.attribution { position: absolute; left: 39px; bottom: 0; width: 499px; height: 14px; padding-left: 5px; background: rgba(245,245,245,.75); display: flex; align-items: center; font-size: 10px; color: #111; white-space: nowrap; }
.attr-data { width: 193px; margin-left: 13px; }
.attr-terms { width: 113px; }

.footer { height: 48px; margin-top: auto; background: #1d2529; color: #fff; fill: #fff; display: flex; align-items: center; justify-content: flex-start; padding-left: 883px; font-size: 15px; letter-spacing: .87px; white-space: nowrap; }
.footer-links { width: 690px; padding-bottom: 2px; }
.footer-fb { margin: 0 23px 0 37px; }
```
